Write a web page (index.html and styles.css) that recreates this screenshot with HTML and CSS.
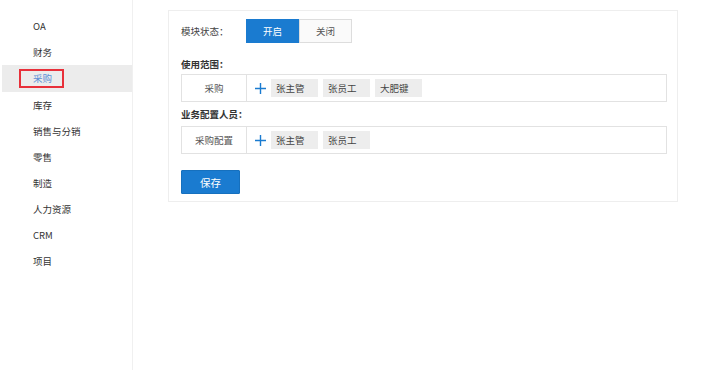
FILE: index.html
```html
<!DOCTYPE html>
<html lang="zh-CN">
<head>
  <meta charset="UTF-8" />
  <title>模块设置</title>
  <link rel="stylesheet" href="styles.css">
</head>
<body>
  <div id="app">
    <aside class="sidebar">
      <div class="nav-item">OA</div>
      <div class="nav-item">财务</div>
      <div class="nav-item active"><span>采购</span></div>
      <div class="nav-item">库存</div>
      <div class="nav-item">销售与分销</div>
      <div class="nav-item">零售</div>
      <div class="nav-item">制造</div>
      <div class="nav-item">人力资源</div>
      <div class="nav-item">CRM</div>
      <div class="nav-item">项目</div>
    </aside>

    <main class="main">
      <div class="card">
        <div class="status-row">
          <span class="status-label">模块状态：</span>
          <div class="switch">
            <button class="switch-btn on">开启</button>
            <button class="switch-btn">关闭</button>
          </div>
        </div>

        <div class="section-title">使用范围：</div>
        <div class="field-row">
          <div class="field-name">采购</div>
          <div class="field-value">
            <span class="add">
              <svg width="11" height="11" viewBox="0 0 11 11"><path d="M5.5 0v11M0 5.5h11" stroke="#1a7bd0" stroke-width="1.4"/></svg>
            </span>
            <span class="tag">张主管</span>
            <span class="tag">张员工</span>
            <span class="tag">大肥键</span>
          </div>
        </div>

        <div class="section-title">业务配置人员：</div>
        <div class="field-row">
          <div class="field-name">采购配置</div>
          <div class="field-value">
            <span class="add">
              <svg width="11" height="11" viewBox="0 0 11 11"><path d="M5.5 0v11M0 5.5h11" stroke="#1a7bd0" stroke-width="1.4"/></svg>
            </span>
            <span class="tag">张主管</span>
            <span class="tag">张员工</span>
          </div>
        </div>

        <button class="save-btn">保存</button>
      </div>
    </main>
  </div>
</body>
</html>
```

FILE: styles.css
```css
/* ======================
   Base
   ====================== */
* {
  box-sizing: border-box;
  margin: 0;
  padding: 0;
}
html, body {
  height: 100%;
  font-family: "Noto Sans CJK SC", "Liberation Sans", sans-serif;
  font-size: 9.5px;
  color: #333;
  background: #fff;
}
#app {
  display: flex;
  height: 100%;
}

/* ======================
   Sidebar
   ====================== */
.sidebar {
  width: 131px;
  margin-left: 2px;
  padding-top: 13px;
  height: 370px;
  border-right: 1px solid #f0f0f0;
}
.nav-item {
  height: 26px;
  line-height: 26px;
  padding-left: 31px;
  color: #333;
}
.nav-item.active {
  background: #ececec;
  height: 27px;
  display: flex;
  align-items: center;
  padding-left: 17px;
}
.nav-item.active span {
  display: block;
  border: 2px solid #e8303a;
  line-height: 15px;
  padding: 0 10px 0 12px;
  color: #5b8fd6;
}

/* ======================
   Main card
   ====================== */
.main {
  flex: 1;
  padding: 10px 0 0 35px;
}
.card {
  width: 510px;
  height: 192px;
  border: 1px solid #eeeeee;
  padding: 8px 11px 0 12px;
}
.status-row {
  display: flex;
  align-items: center;
}
.status-label {
  width: 65px;
  color: #444;
}
.switch {
  display: flex;
}
.switch-btn {
  width: 53px;
  height: 24px;
  font: inherit;
  border: 1px solid #ddd;
  background: #fafafa;
  color: #555;
}
.switch-btn.on {
  background: #1a7bd0;
  border-color: #1a7bd0;
  color: #fff;
}
.section-title {
  font-weight: bold;
  color: #333;
  height: 14px;
  line-height: 14px;
  margin-top: 14px;
  margin-bottom: 3px;
}
.field-row + .section-title {
  margin-top: 5px;
  margin-bottom: 5px;
}
.field-row {
  display: flex;
  width: 486px;
  height: 28px;
  border: 1px solid #e2e2e2;
}
.field-name {
  width: 65px;
  border-right: 1px solid #e2e2e2;
  text-align: center;
  line-height: 26px;
  color: #555;
}
.field-value {
  display: flex;
  align-items: center;
  padding-left: 7px;
  gap: 5px;
}
.add {
  display: flex;
  width: 12px;
  justify-content: center;
}
.tag {
  background: #ededed;
  color: #444;
  height: 18px;
  line-height: 18px;
  width: 47px;
  padding-left: 5px;
}
.save-btn {
  margin-top: 16px;
  width: 59px;
  height: 24px;
  background: #1a7bd0;
  color: #fff;
  border: 1px solid #1670be;
  border-radius: 1px;
  font: inherit;
  font-size: 10.5px;
}
```
